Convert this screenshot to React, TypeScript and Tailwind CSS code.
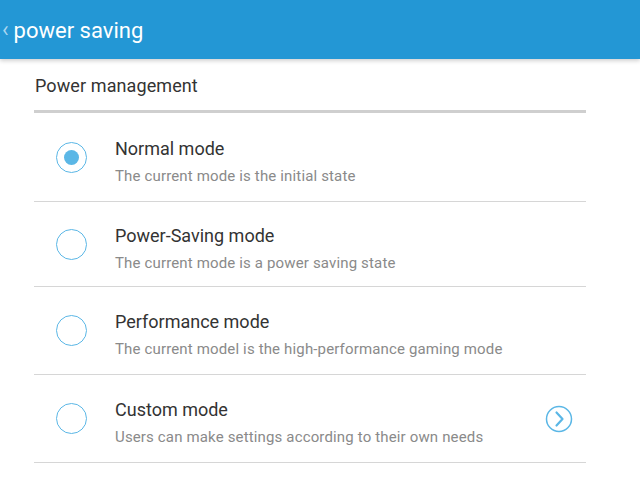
import React, { useState } from 'react';

const modes = [
  { title: 'Normal mode', desc: 'The current mode is the initial state', h: 'h-[89px]' },
  { title: 'Power-Saving mode', desc: 'The current mode is a power saving state', h: 'h-[85px]' },
  { title: 'Performance mode', desc: 'The current model is the high-performance gaming mode', h: 'h-[88px]' },
  { title: 'Custom mode', desc: 'Users can make settings according to their own needs', h: 'h-[88px]', more: true },
];

export default function App() {
  const [selected, setSelected] = useState(0);

  return (
    <div className="w-[640px] h-[498px] bg-white overflow-hidden font-['Roboto',sans-serif]">
      {/* Header */}
      <div className="relative h-[59px] bg-[#2397d5] flex items-center shadow-[0_2px_4px_rgba(0,0,0,0.18)]">
        <span className="ml-[2px] text-[22px] text-[#a9d6f0] leading-none mt-[1px]">‹</span>
        <span className="ml-[5px] text-[22px] text-white leading-none mt-[2px]">power saving</span>
      </div>

      <div className="px-[34px]">
        <div className="h-[51px] pt-[16px] pl-[1px] text-[18px] text-[#333] leading-[22px] tracking-[0.1px]">Power management</div>
        <div className="h-[3px] w-[552px] bg-[#cfcfcf]" />

        {modes.map((m, i) => (
          <div
            key={m.title}
            onClick={() => setSelected(i)}
            className={`${m.h} w-[552px] border-b border-[#d6d6d6] flex items-center`}
          >
            <div className="w-[81px] pl-[22px] flex items-center">
              <div className="w-[31px] h-[31px] rounded-full border-[1.5px] border-[#5bb7e6] flex items-center justify-center">
                {selected === i && <div className="w-[15px] h-[15px] rounded-full bg-[#5bb7e6]" />}
              </div>
            </div>
            <div className="flex-1 mt-[8px]">
              <div className="text-[18px] text-[#333] leading-[22px]">{m.title}</div>
              <div className="mt-[7px] text-[15px] text-[#8a8a8a] leading-[18px] tracking-[0.15px]">{m.desc}</div>
            </div>
            {m.more && (
              <div className="mr-[13px]">
                <svg width="28" height="28" viewBox="0 0 28 28" fill="none">
                  <circle cx="14" cy="14" r="12.5" stroke="#5bb7e6" strokeWidth="1.5" />
                  <path d="M11.5 7.5 L17.5 14 L11.5 20.5" stroke="#5bb7e6" strokeWidth="2.2" strokeLinecap="round" strokeLinejoin="round" />
                </svg>
              </div>
            )}
          </div>
        ))}
      </div>
    </div>
  );
}
